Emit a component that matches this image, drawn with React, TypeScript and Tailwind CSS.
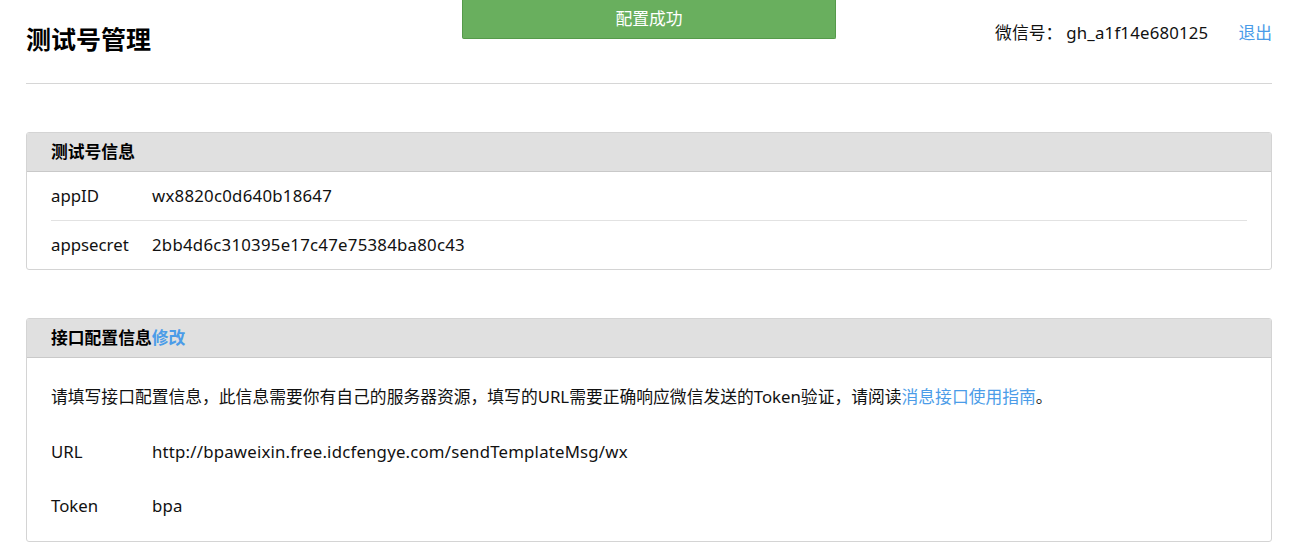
import React from "react";

const font = { fontFamily: '"Noto Sans", "Noto Sans CJK SC", sans-serif' };

const appInfo = [
  { label: "appID", value: "wx8820c0d640b18647" },
  { label: "appsecret", value: "2bb4d6c310395e17c47e75384ba80c43" },
];

function PanelHeader({ children }: { children: React.ReactNode }) {
  return (
    <div className="h-[39px] flex items-center px-6 bg-[#e0e0e0] border-b border-[#c9c9c9] text-[16.8px] font-bold text-black">
      {children}
    </div>
  );
}

export default function App() {
  return (
    <div className="relative min-h-screen bg-white text-[#111] pl-[26px] pr-[28px] text-[16.8px]" style={font}>
      {/* toast */}
      <div className="absolute top-0 left-[462px] w-[374px] h-[39px] flex items-center justify-center bg-[#69af5e] border border-t-0 border-[#559a4a] rounded-b-[2px] text-white text-[16.8px]">
        配置成功
      </div>

      <header className="h-[84px] flex justify-between items-start border-b border-[#d6d6d6]">
        <h1 className="pt-[22px] text-[25px] leading-[34px] font-bold text-black">测试号管理</h1>
        <div className="pt-[20px] leading-[26px] flex items-center">
          <span>微信号：</span>
          <span className="ml-[4px] tracking-[0.2px]">gh_a1f14e680125</span>
          <a className="ml-[30px] text-[#4b9ce8]">退出</a>
        </div>
      </header>

      <section className="mt-[48px] border border-[#d4d4d4] rounded-[3px] overflow-hidden">
        <PanelHeader>测试号信息</PanelHeader>
        <div className="px-6 divide-y divide-[#e2e2e2]">
          {appInfo.map((row) => (
            <div key={row.label} className="h-[48px] box-content flex items-center">
              <span className="w-[101px] shrink-0">{row.label}</span>
              <span className="tracking-[0.25px]">{row.value}</span>
            </div>
          ))}
        </div>
      </section>

      <section className="mt-[48px] border border-[#d4d4d4] rounded-[3px] overflow-hidden">
        <PanelHeader>
          接口配置信息<a className="text-[#4b9ce8]">修改</a>
        </PanelHeader>
        <div className="px-6 pt-[25px] pb-[21px] leading-[28px]">
          <p>
            请填写接口配置信息，此信息需要你有自己的服务器资源，填写的URL需要正确响应微信发送的Token验证，请阅读
            <a className="text-[#4b9ce8]">消息接口使用指南</a>。
          </p>
          <div className="mt-[27px] flex">
            <span className="w-[101px] shrink-0">URL</span>
            <span className="tracking-[0.2px]">http://bpaweixin.free.idcfengye.com/sendTemplateMsg/wx</span>
          </div>
          <div className="mt-[26px] flex">
            <span className="w-[101px] shrink-0">Token</span>
            <span className="tracking-[0.2px]">bpa</span>
          </div>
        </div>
      </section>
    </div>
  );
}
